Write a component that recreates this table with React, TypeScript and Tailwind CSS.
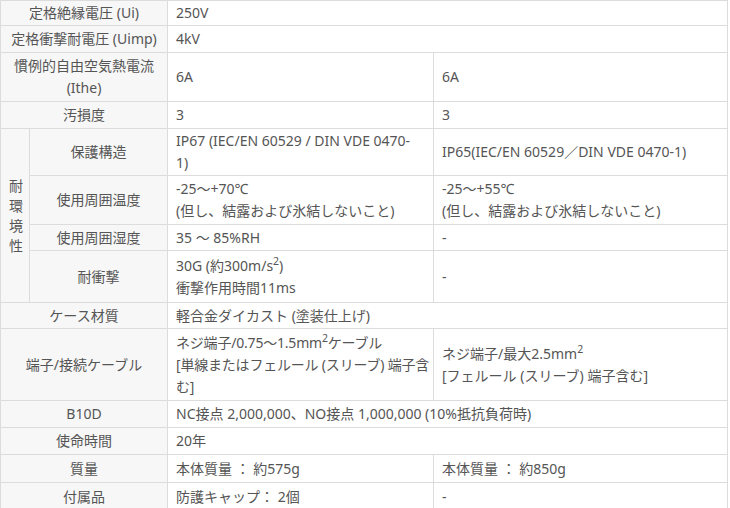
const th = "border border-[#dcdcdc] bg-[#f7f7f7] text-center font-normal px-2 py-0";
const td = "border border-[#dcdcdc] bg-white text-left px-2 py-0 whitespace-nowrap";

export default function App() {
  return (
    <div
      className="w-[730px] h-[508px] overflow-hidden bg-white text-[14px] leading-[22px] text-[#555]"
      style={{ fontFamily: '"Noto Sans", "Noto Sans CJK JP", sans-serif' }}
    >
      <table className="table-fixed border-collapse w-[727px]">
        <colgroup>
          <col className="w-[29px]" />
          <col className="w-[138px]" />
          <col className="w-[266px]" />
          <col className="w-[294px]" />
        </colgroup>
        <tbody>
          <tr className="h-[25px]">
            <th colSpan={2} className={th}>定格絶縁電圧 (Ui)</th>
            <td colSpan={2} className={td}>250V</td>
          </tr>
          <tr className="h-[27px]">
            <th colSpan={2} className={th}>定格衝撃耐電圧 (Uimp)</th>
            <td colSpan={2} className={td}>4kV</td>
          </tr>
          <tr className="h-[49px]">
            <th colSpan={2} className={th}>慣例的自由空気熱電流<br />(Ithe)</th>
            <td className={td}>6A</td>
            <td className={td}>6A</td>
          </tr>
          <tr className="h-[27px]">
            <th colSpan={2} className={th}>汚損度</th>
            <td className={td}>3</td>
            <td className={td}>3</td>
          </tr>
          <tr className="h-[47px]">
            <th rowSpan={4} className={`${th} px-0 leading-[20px]`}>
              耐<br />環<br />境<br />性
            </th>
            <th className={th}>保護構造</th>
            <td className={td}>IP67 (IEC/EN 60529 / DIN VDE 0470-<br />1)</td>
            <td className={td}>IP65(IEC/EN 60529／DIN VDE 0470-1)</td>
          </tr>
          <tr className="h-[49px]">
            <th className={th}>使用周囲温度</th>
            <td className={td}>-25～+70℃<br />(但し、結露および氷結しないこと)</td>
            <td className={td}>-25～+55℃<br />(但し、結露および氷結しないこと)</td>
          </tr>
          <tr className="h-[26px]">
            <th className={th}>使用周囲湿度</th>
            <td className={td}>35 ～ 85%RH</td>
            <td className={td}>-</td>
          </tr>
          <tr className="h-[52px]">
            <th className={th}>耐衝撃</th>
            <td className={td}>
              30G (約300m/s<sup>2</sup>)<br />衝撃作用時間11ms
            </td>
            <td className={td}>-</td>
          </tr>
          <tr className="h-[26px]">
            <th colSpan={2} className={th}>ケース材質</th>
            <td colSpan={2} className={td}>軽合金ダイカスト (塗装仕上げ)</td>
          </tr>
          <tr className="h-[72px]">
            <th colSpan={2} className={th}>端子/接続ケーブル</th>
            <td className={`${td} tracking-[-0.2px]`}>
              ネジ端子/0.75～1.5mm<sup>2</sup>ケーブル<br />
              [単線またはフェルール (スリーブ) 端子含<br />む]
            </td>
            <td className={td}>
              ネジ端子/最大2.5mm<sup>2</sup><br />[フェルール (スリーブ) 端子含む]
            </td>
          </tr>
          <tr className="h-[27px]">
            <th colSpan={2} className={th}>B10D</th>
            <td colSpan={2} className={td}>NC接点 2,000,000、NO接点 1,000,000 (10%抵抗負荷時)</td>
          </tr>
          <tr className="h-[27px]">
            <th colSpan={2} className={th}>使命時間</th>
            <td colSpan={2} className={td}>20年</td>
          </tr>
          <tr className="h-[28px]">
            <th colSpan={2} className={th}>質量</th>
            <td className={td}>本体質量 ： 約575g</td>
            <td className={td}>本体質量 ： 約850g</td>
          </tr>
          <tr className="h-[28px]">
            <th colSpan={2} className={th}>付属品</th>
            <td className={td}>防護キャップ： 2個</td>
            <td className={td}>-</td>
          </tr>
        </tbody>
      </table>
    </div>
  );
}
